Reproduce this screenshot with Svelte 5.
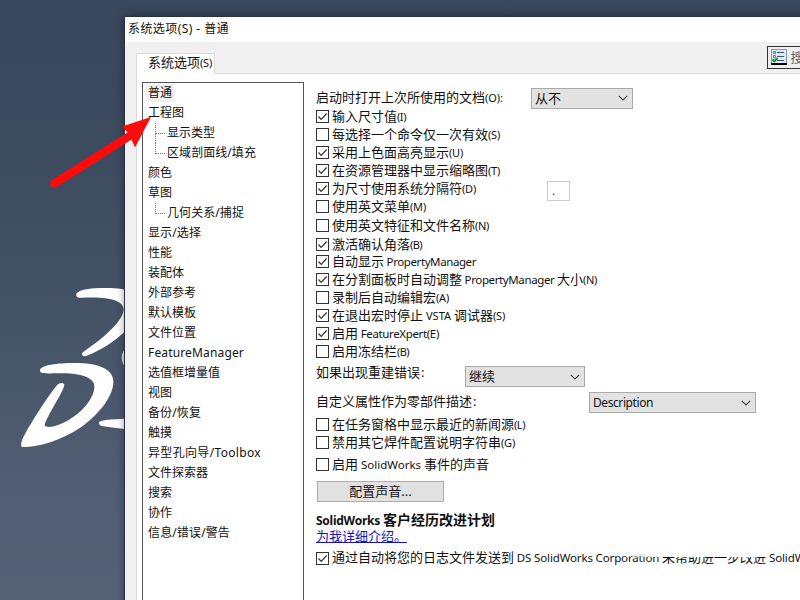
<script>
  // Spreads a text run over the given pixel width.
  function fit(node, width) {
    if (!width) return;
    const natural = node.getBoundingClientRect().width;
    node.style.letterSpacing = (width - natural) / node.textContent.length + 'px';
  }

  const tree = [
    { t: '普通', sel: true },
    { t: '工程图' },
    { t: '显示类型', sub: 'mid' },
    { t: '区域剖面线/填充', sub: 'end', w: 89 },
    { t: '颜色' },
    { t: '草图' },
    { t: '几何关系/捕捉', sub: 'end', w: 77 },
    { t: '显示/选择', w: 53 },
    { t: '性能' },
    { t: '装配体' },
    { t: '外部参考' },
    { t: '默认模板' },
    { t: '文件位置' },
    { t: 'FeatureManager', w: 96 },
    { t: '选值框增量值' },
    { t: '视图' },
    { t: '备份/恢复', w: 53 },
    { t: '触摸' },
    { t: '异型孔向导/Toolbox', w: 113 },
    { t: '文件探索器' },
    { t: '搜索' },
    { t: '协作' },
    { t: '信息/错误/警告', w: 82 }
  ];

  // Each run is [text, width]; runs without a width keep their natural one.
  const general = [
    { on: true, runs: [['输入尺寸值'], ['(I)', 9]] },
    { runs: [['每选择一个命令仅一次有效'], ['(S)', 12]] },
    { on: true, runs: [['采用上色面高亮显示'], ['(U)', 14]] },
    { on: true, runs: [['在资源管理器中显示缩略图'], ['(T)', 12]] },
    { on: true, box: true, runs: [['为尺寸使用系统分隔符'], ['(D)', 14]] },
    { runs: [['使用英文菜单'], ['(M)', 16]] },
    { gap: 1, runs: [['使用英文特征和文件名称'], ['(N)', 14]] },
    { gap: 1, on: true, runs: [['激活确认角落'], ['(B)', 12]] },
    { gap: -1, on: true, runs: [['自动显示'], [' PropertyManager', 92]] },
    { on: true, runs: [['在分割面板时自动调整'], [' PropertyManager ', 95], ['大小'], ['(N)', 14]] },
    { runs: [['录制后自动编辑宏'], ['(A)', 13]] },
    { on: true, runs: [['在退出宏时停止'], [' VSTA ', 31], ['调试器'], ['(S)', 12]] },
    { on: true, runs: [['启用'], [' FeatureXpert(E)', 81]] },
    { runs: [['启用冻结栏'], ['(B)', 12]] }
  ];
  const extra = [
    { runs: [['在任务窗格中显示最近的新闻源'], ['(L)', 11]] },
    { runs: [['禁用其它焊件配置说明字符串'], ['(G)', 14]] },
    { gap: 4, runs: [['启用'], [' SolidWorks ', 66], ['事件的声音']] }
  ];
  const feedback = {
    on: true,
    runs: [['通过自动将您的日志文件发送到'], [' DS SolidWorks Corporation ', 148], ['来帮助进一步改进'], [' SolidWorks', 62]]
  };
</script>

{#snippet runs(list)}
  {#each list as [text, width]}<span class:latin={width} class:name={width && text.length > 6} use:fit={width}>{text}</span>{/each}
{/snippet}

{#snippet option(o)}
  <div class="option" style:margin-top="{o.gap ?? 0}px">
    <span class="check">
      {#if o.on}<svg viewBox="0 0 11 11" width="11" height="11"><path d="M1.5 5.5 4.2 8.3 9.6 2.5" /></svg>{/if}
    </span>
    <span class="label">{@render runs(o.runs)}</span>
    {#if o.box}<span class="separator">.</span>{/if}
  </div>
{/snippet}

{#snippet select(kind, text, width)}
  <div class="select {kind}">
    <span class:latin={width} use:fit={width}>{text}</span>
    <svg viewBox="0 0 10 6" width="10" height="6"><path d="M.8.8 5 5 9.2.8" /></svg>
  </div>
{/snippet}

<div class="desktop">
  <svg class="logo" viewBox="0 0 375 600" width="125" height="200">
    <path d="M230 70C240 56 285 53 330 54C350 55 365 56 380 60V180C350 210 300 244 258 258C249 260 244 256 247 249C255 239 285 222 310 200C345 170 370 140 371 119C371 97 345 86 300 83C275 82 255 83 238 83C230 83 227 76 230 70Z" />
    <path d="M120 300C125 285 170 279 225 279C290 279 338 295 340 332C342 375 300 430 245 470C185 511 115 532 65 531C59 520 72 495 90 466C112 430 150 370 171 346C178 338 191 336 193 344C193 362 134 448 134 466C138 476 165 470 187 460C240 435 280 390 283 353C286 323 245 311 190 310C160 310 140 311 128 309C121 308 119 304 120 300Z" />
    <path d="M297 457C302 449 340 448 380 446V478C350 474 325 472 305 468C299 466 296 462 297 457Z" />
    <path d="M380 237C360 243 360 282 380 294Z" fill="#d9dcdf" />
  </svg>

  <div class="window">
    <header class="title"><span use:fit={101}>系统选项(S) - 普通</span></header>
    <div class="client">
      <div class="tabs">
        <div class="tab">{@render runs([['系统选项'], ['(S)', 12]])}</div>
        <div class="search">
          <svg viewBox="0 0 16 16" width="16" height="16">
            <rect width="16" height="16" fill="#7f9cc4" />
            <rect x="1" y="1" width="14" height="13" fill="#dbe9fb" />
            <path d="M0 15H16" stroke="#000" stroke-width="2" />
            <path d="M6 3.5H13M6 7.5H13M6 11.5H13" stroke="#456" />
            <path d="M2.5 2.5h2v2h-2zM2.5 6.5h2v2h-2z" fill="none" stroke="#567" stroke-width=".8" />
            <path d="M1.5 10.5 3.3 12.3 6.5 9" fill="none" stroke="#089b27" stroke-width="2" />
          </svg>
          <span>搜</span>
        </div>
      </div>
      <div class="panel">
        <nav class="tree">
          {#each tree as item}
            <div class="node {item.sub ?? ''}" class:child={item.sub}>
              <span class:selected={item.sel} use:fit={item.w}>{item.t}</span>
            </div>
          {/each}
        </nav>
        <main>
          <div class="field first">
            <span class="caption">{@render runs([['启动时打开上次所使用的文档'], ['(O):', 18]])}</span>
            {@render select('startup', '从不')}
          </div>
          {#each general as o}{@render option(o)}{/each}
          <div class="field rebuild">
            <span class="caption">如果出现重建错误<span class="colon">:</span></span>
            {@render select('error', '继续')}
          </div>
          <div class="field property">
            <span class="caption">自定义属性作为零部件描述<span class="colon">:</span></span>
            {@render select('description', 'Description', 60)}
          </div>
          {#each extra as o}{@render option(o)}{/each}
          <button>配置声音...</button>
          <h2><span use:fit={64}>SolidWorks</span><span class="cn" use:fit={112}>客户经历改进计划</span></h2>
          <a href="#details">为我详细介绍。</a>
          <div class="feedback">{@render option(feedback)}<i></i></div>
        </main>
      </div>
    </div>
  </div>

  <svg class="arrow" viewBox="0 0 106 80" width="106" height="80">
    <path d="M104 5 75 14.5 80.5 20.5 4 68.5Q2 70.5 4 74Q6.500 77 9 75.500L84.500 27.500 88 35.500Z" fill="#fb0b0b" />
  </svg>
</div>

<style>
  :global(body) { overflow: hidden; }
  .desktop {
    position: relative;
    width: 800px;
    height: 600px;
    overflow: hidden;
    box-sizing: border-box;
    padding: 17px 0 0 125px;
    background: linear-gradient(#38475c, #3d4b5f 25%, #455467 55%, #525e73 82%, #566176);
    font: 13px/18px "Noto Sans", "Noto Sans CJK SC", sans-serif;
    color: #111;
    white-space: nowrap;
  }
  .logo { position: absolute; left: 0; top: 270px; fill: #fff; }
  .arrow { position: absolute; left: 47px; top: 112px; }
  .window {
    position: relative;
    width: 720px;
    height: 600px;
    background: #f0f0f0;
    box-shadow: 0 0 0 1px #273345, 0 0 9px rgba(0, 0, 0, .45);
  }
  .title { height: 25px; padding-left: 3px; background: #fff; font-size: 12px; line-height: 24px; }
  .client { padding: 0 0 0 11px; }
  .tabs { display: flex; align-items: flex-end; height: 31px; }
  .tab {
    box-sizing: border-box;
    width: 80px;
    height: 21px;
    padding-left: 11px;
    border: 1px solid #d9d9d9;
    border-bottom: 0;
    margin-bottom: -1px;
    background: #fff;
    line-height: 17px;
    z-index: 1;
  }
  .search {
    display: flex;
    box-sizing: border-box;
    gap: 4px;
    width: 80px;
    height: 23px;
    margin: 0 0 4px 552px;
    padding: 2px 3px;
    border: 1px solid #333;
    color: #666;
    line-height: 16px;
  }
  .search svg { flex: none; }
  .panel {
    display: flex;
    height: 540px;
    border: 1px solid #d9d9d9;
    background: #fff;
  }
  .tree {
    box-sizing: border-box;
    flex: none;
    width: 162px;
    height: 540px;
    margin: 8px 12px 0 5px;
    border: 1px solid #555;
    font-size: 12px;
    line-height: 20px;
  }
  .node { position: relative; height: 20px; padding-left: 5px; }
  .node span { display: inline-block; }
  .node .selected { height: 18px; margin: 1px 0 0 -2px; padding: 0 2px; line-height: 18px; background: #f0f0f0; }
  .node.child { padding-left: 24px; }
  .child::before {
    content: "";
    position: absolute;
    left: 12px;
    top: 0;
    width: 9px;
    height: 10px;
    border: dotted #777;
    border-width: 0 0 1px 1px;
  }
  .mid::after {
    content: "";
    position: absolute;
    left: 12px;
    top: 10px;
    height: 10px;
    border-left: 1px dotted #777;
  }
  main { flex: none; width: 520px; }
  .latin { font-size: 11px; white-space: pre; }
  .name { font-size: 11.5px; }
  .colon { margin-left: 1px; }
  .field { display: flex; align-items: flex-start; height: 22px; }
  .field.first { padding-top: 14px; height: 20px; }
  .field.rebuild { padding-top: 6px; height: 26px; }
  .field.property { height: 23px; }
  .select {
    display: flex;
    box-sizing: border-box;
    align-items: center;
    justify-content: space-between;
    height: 21px;
    padding: 0 4px 1px 3px;
    border: 1px solid #a9a9a9;
    background: #e2e2e2;
  }
  .select svg { margin-top: 1px; fill: none; stroke: #444; stroke-width: 1.2; }
  .first .caption { width: 215px; }
  .rebuild .caption { width: 149px; margin-top: -4px; }
  .property .caption { width: 273px; margin-top: -1px; }
  .startup { width: 102px; padding-bottom: 2px; }
  .error { width: 120px; margin-top: -1px; }
  .description { width: 167px; margin-top: -1px; padding-bottom: 0; }
  .description .latin { font-size: 12px; }
  .option { position: relative; display: flex; height: 18px; }
  .check {
    box-sizing: border-box;
    flex: none;
    width: 13px;
    height: 13px;
    margin: 2px 3px 0 0;
    border: 1px solid #333;
  }
  .check svg { display: block; fill: none; stroke: #333; stroke-width: 1.2; }
  .label { line-height: 17px; }
  .separator {
    position: absolute;
    left: 231px;
    top: 1px;
    box-sizing: border-box;
    width: 23px;
    height: 20px;
    padding-left: 4px;
    border: 1px solid #ccc;
    font-size: 11px;
  }
  button {
    display: block;
    width: 127px;
    height: 21px;
    margin: 7px 0 10px 1px;
    padding: 0 0 1px;
    border: 1px solid #adadad;
    background: #e1e1e1;
    color: #111;
    font: 13px/18px "Noto Sans", "Noto Sans CJK SC", sans-serif;
  }
  h2 { margin: 0; font-size: 12px; line-height: 16px; height: 16px; }
  .cn { font-size: 14px; margin-left: 3px; }
  a { display: block; height: 19px; color: #1414b8; line-height: 17px; }
  .feedback { position: relative; padding-top: 3px; }
  .feedback .label, .feedback :global(.label) { line-height: 15px; }
  .feedback i {
    position: absolute;
    left: 300px;
    top: 3px;
    width: 152px;
    height: 7px;
    background: linear-gradient(90deg, transparent, #fff 30%, #fff);
  }
</style>
